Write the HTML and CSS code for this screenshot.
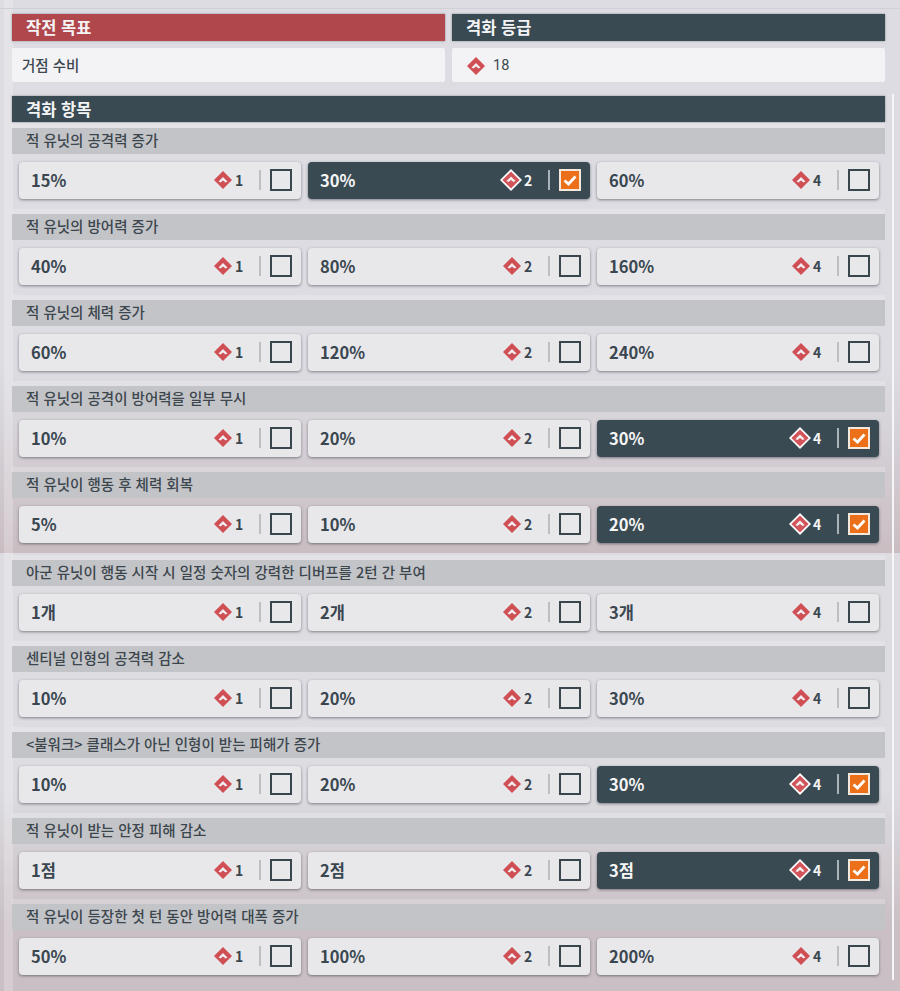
FILE: index.html
```html
<!DOCTYPE html>
<html lang="ko">
<head>
<meta charset="utf-8">
<title>격화 항목</title>
<link rel="stylesheet" href="styles.css">
</head>
<body>
<svg class="defs" width="0" height="0" aria-hidden="true">
  <symbol id="gem" viewBox="0 0 20 20">
    <path fill="#cf4f54" d="M10 0 20 10 10 20 0 10Z"/>
    <path fill="#f0eef0" d="M10 6.8 15 11.6 12.8 12.8 10 10.6 7.2 12.8 5 11.6Z"/>
  </symbol>
  <symbol id="gem-on" viewBox="0 0 24 24">
    <path fill="#fff" d="M12 0 24 12 12 24 0 12Z"/>
    <path fill="#d1555a" d="M12 2.6 21.4 12 12 21.4 2.6 12Z"/>
    <path fill="#f4f0f0" d="M12 8.2 17 13 14.8 14.2 12 12 9.2 14.2 7 13Z"/>
  </symbol>
</svg>
<main class="page" id="page">
  <div class="top">
    <section>
      <h2 class="bar bar-red">작전 목표</h2>
      <div class="info">거점 수비</div>
    </section>
    <section>
      <h2 class="bar bar-dark">격화 등급</h2>
      <div class="info info-grade"><svg class="gem-lg"><use href="#gem"/></svg>18</div>
    </section>
  </div>
  <h2 class="bar bar-dark bar-section">격화 항목</h2>
  <div class="groups" id="groups"></div>
</main>
<div class="rail" aria-hidden="true"></div>
<script src="app.js"></script>
</body>
</html>
```

FILE: app.js
```js
var data = [
  ["적 유닛의 공격력 증가", ["15%", "30%", "60%"], 1],
  ["적 유닛의 방어력 증가", ["40%", "80%", "160%"], -1],
  ["적 유닛의 체력 증가", ["60%", "120%", "240%"], -1],
  ["적 유닛의 공격이 방어력을 일부 무시", ["10%", "20%", "30%"], 2],
  ["적 유닛이 행동 후 체력 회복", ["5%", "10%", "20%"], 2],
  ["아군 유닛이 행동 시작 시 일정 숫자의 강력한 디버프를 2턴 간 부여", ["1개", "2개", "3개"], -1],
  ["센티널 인형의 공격력 감소", ["10%", "20%", "30%"], -1],
  ["<불워크> 클래스가 아닌 인형이 받는 피해가 증가", ["10%", "20%", "30%"], 2],
  ["적 유닛이 받는 안정 피해 감소", ["1점", "2점", "3점"], 2],
  ["적 유닛이 등장한 첫 턴 동안 방어력 대폭 증가", ["50%", "100%", "200%"], -1]
];
var costs = [1, 2, 4];
var html = "";
data.forEach(function (g, gi) {
  html += '<section class="group' + (gi === 4 ? ' group-tall' : '') + '"><h3 class="group-title"></h3><div class="opts">';
  g[1].forEach(function (v, i) {
    var on = g[2] === i;
    html += '<div class="opt' + (on ? ' opt-on' : '') + '"><span class="opt-val">' + v + '</span>' +
      '<svg class="' + (on ? 'gem-on' : 'gem') + '"><use href="#' + (on ? 'gem-on' : 'gem') + '"/></svg>' +
      '<span class="opt-cost">' + costs[i] + '</span><span class="opt-sep"></span>' +
      '<span class="check">' + (on ? '<svg viewBox="0 0 18 18"><path d="M3.5 9.5 7.5 13 14.5 5.5" fill="none" stroke="#fff" stroke-width="2.8"/></svg>' : '') + '</span></div>';
  });
  html += '</div></section>';
});
document.getElementById("groups").innerHTML = html;
var titles = document.querySelectorAll(".group-title");
data.forEach(function (g, i) { titles[i].textContent = g[0]; });
```

FILE: styles.css
```css
* { box-sizing: border-box; }
html, body { margin: 0; padding: 0; }
body {
  width: 900px;
  height: 991px;
  overflow: hidden;
  position: relative;
  font-family: "Noto Sans CJK KR", "Noto Sans", sans-serif;
  color: #3a4750;
  background:
    linear-gradient(#d0d0d7, #d0d0d7) 0 8px / 100% 1px no-repeat,
    linear-gradient(rgba(255, 255, 255, .22), rgba(255, 255, 255, .22)) 4px 0 / 9px 100% no-repeat,
    linear-gradient(180deg,
      #dcdce2 0, #dcdce2 370px, #d4cfd5 450px, #c9bdc2 553px,
      #dcdce1 553px, #dcdce1 790px, #d3cdd2 860px, #c9bfc5 930px, #c9bfc5 991px);
}
.defs { position: absolute; }
.page { padding: 14px 15px 0 12px; }
.top {
  display: grid;
  grid-template-columns: 433px 433px;
  gap: 7px;
}
.bar {
  margin: 0;
  height: 27px;
  padding-left: 14px;
  font-size: 16.5px;
  font-weight: 700;
  line-height: 27px;
  color: #f4f4f6;
  box-shadow: 0 0 2px rgba(60, 60, 70, .5);
}
.bar-red { background: #b0474c; }
.bar-dark { background: #394a52; }
.bar-section { margin-top: 14px; height: 26px; line-height: 26px; }
.info {
  margin-top: 7px;
  height: 34px;
  padding-left: 10px;
  background: #f3f3f6;
  border-radius: 2px;
  font-size: 14.5px;
  font-weight: 500;
  line-height: 34px;
  color: #3d4850;
}
.info-grade {
  display: flex;
  align-items: center;
  gap: 8px;
  padding-left: 15px;
  padding-top: 1px;
  font-family: Roboto, "Noto Sans", sans-serif;
  font-weight: 400;
}
.gem-lg { width: 18px; height: 18px; }
.groups { display: flex; flex-direction: column; margin-top: 6px; }
.group {
  height: 81px;
  margin-bottom: 5px;
  box-shadow: 0 -5px 0 rgba(255, 255, 255, .2);
}
.group-tall { margin-bottom: 6px; height: 82px; }
.group-title {
  margin: 0;
  height: 26px;
  padding-left: 14px;
  background: #c3c4c8;
  font-size: 14.5px;
  font-weight: 500;
  line-height: 24px;
  color: #3c464d;
}
.opts {
  display: grid;
  grid-template-columns: repeat(3, 282px);
  gap: 7px;
  padding: 8px 7px 0;
}
.opt {
  height: 36.5px;
  display: flex;
  align-items: center;
  padding: 0 9px 0 12px;
  background: #e8e8eb;
  border-radius: 4px;
  box-shadow: 0 1px 3px rgba(50, 50, 60, .55);
  color: #3a4750;
}
.opt-val { flex: 1; font-size: 16.5px; font-weight: 700; line-height: 36px; }
.gem { width: 18px; height: 18px; }
.gem-on { width: 22px; height: 22px; margin-left: -3px; }
.opt-cost {
  width: 21px;
  margin-left: 3px;
  font-size: 14px;
  font-weight: 700;
  line-height: 34px;
}
.opt-on .opt-cost { margin-left: 2px; }
.opt-sep { width: 2px; height: 20px; background: #bcbec2; margin-right: 9px; margin-left: 3px; }
.check {
  width: 22px;
  height: 22px;
  border: 2px solid #39464e;
  display: block;
}
.opt-on { background: #394a52; color: #f5f5f6; }
.opt-on .opt-sep { background: #aab3b7; }
.opt-on .check { background: #ec701a; border: 2px solid #f5e9de; }
.check svg { display: block; width: 100%; height: 100%; }
.rail {
  position: absolute;
  left: 892px;
  top: 94px;
  width: 2px;
  height: 886px;
  background: #f6f6f8;
}
```
